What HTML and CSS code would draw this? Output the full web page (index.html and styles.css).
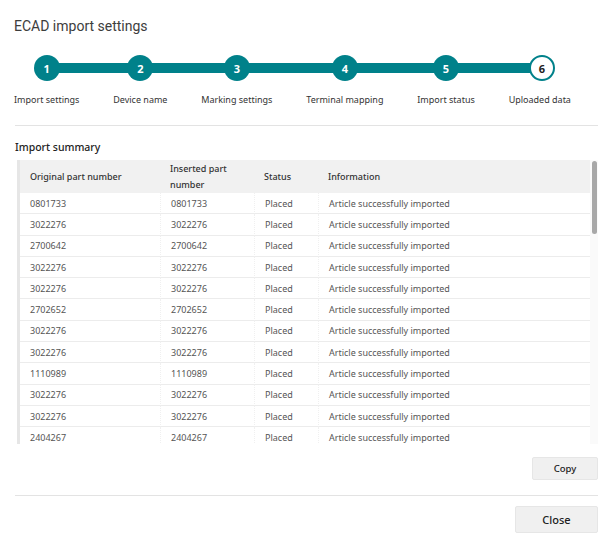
FILE: index.html
```html
<!DOCTYPE html>
<html lang="en">
  <head>
    <meta charset="UTF-8" />
    <meta name="viewport" content="width=device-width, initial-scale=1.0" />
    <title>ECAD import settings</title>
    <link rel="stylesheet" href="styles.css">
  </head>
  <body>
    <div class="dialog">
      <h1 class="title">ECAD import settings</h1>

      <div class="stepper">
        <div class="track"></div>
        <div class="step"><span class="dot">1</span><span class="label">Import settings</span></div>
        <div class="step"><span class="dot">2</span><span class="label">Device name</span></div>
        <div class="step"><span class="dot">3</span><span class="label">Marking settings</span></div>
        <div class="step"><span class="dot">4</span><span class="label">Terminal mapping</span></div>
        <div class="step"><span class="dot">5</span><span class="label">Import status</span></div>
        <div class="step current"><span class="dot">6</span><span class="label">Uploaded data</span></div>
      </div>

      <hr class="divider" />

      <h2 class="section-title">Import summary</h2>

      <div class="grid">
        <table>
          <thead>
            <tr>
              <th class="c1">Original part number</th>
              <th class="c2">Inserted part number</th>
              <th class="c3">Status</th>
              <th class="c4">Information</th>
            </tr>
          </thead>
          <tbody>
            <tr><td>0801733</td><td>0801733</td><td>Placed</td><td>Article successfully imported</td></tr>
            <tr><td>3022276</td><td>3022276</td><td>Placed</td><td>Article successfully imported</td></tr>
            <tr><td>2700642</td><td>2700642</td><td>Placed</td><td>Article successfully imported</td></tr>
            <tr><td>3022276</td><td>3022276</td><td>Placed</td><td>Article successfully imported</td></tr>
            <tr><td>3022276</td><td>3022276</td><td>Placed</td><td>Article successfully imported</td></tr>
            <tr><td>2702652</td><td>2702652</td><td>Placed</td><td>Article successfully imported</td></tr>
            <tr><td>3022276</td><td>3022276</td><td>Placed</td><td>Article successfully imported</td></tr>
            <tr><td>3022276</td><td>3022276</td><td>Placed</td><td>Article successfully imported</td></tr>
            <tr><td>1110989</td><td>1110989</td><td>Placed</td><td>Article successfully imported</td></tr>
            <tr><td>3022276</td><td>3022276</td><td>Placed</td><td>Article successfully imported</td></tr>
            <tr><td>3022276</td><td>3022276</td><td>Placed</td><td>Article successfully imported</td></tr>
            <tr><td>2404267</td><td>2404267</td><td>Placed</td><td>Article successfully imported</td></tr>
          </tbody>
        </table>
        <div class="scrollbar"><div class="thumb"></div></div>
      </div>

      <div class="actions">
        <button class="btn btn-copy">Copy</button>
      </div>

      <hr class="divider bottom" />

      <div class="actions">
        <button class="btn btn-close">Close</button>
      </div>
    </div>
  </body>
</html>
```

FILE: styles.css
```css
* {
  box-sizing: border-box;
}

html,
body {
  margin: 0;
  padding: 0;
  background-color: #fff;
}

body {
  font-family: "Noto Sans", "Open Sans", sans-serif;
  color: #333;
}

.dialog {
  width: 613px;
  height: 549px;
  padding: 15px 15px 0 14px;
}

.title {
  margin: 0;
  font-family: Roboto, "Noto Sans", sans-serif;
  font-size: 14px;
  font-weight: 400;
  line-height: 22px;
  color: #3d3d3d;
}

/* stepper */
.stepper {
  position: relative;
  display: flex;
  justify-content: space-between;
  margin: 18px 27px 0 0;
}

.track {
  position: absolute;
  top: 8px;
  left: 30px;
  right: 29px;
  height: 10px;
  background-color: #00818a;
}

.step {
  position: relative;
  display: flex;
  flex-direction: column;
  align-items: center;
}

.step:first-of-type .dot {
  margin-right: 5px;
}

.step.current .dot {
  margin-left: 4px;
}

.dot {
  width: 26px;
  height: 26px;
  border-radius: 50%;
  background-color: #00818a;
  color: #fff;
  font-size: 11px;
  font-weight: 700;
  display: flex;
  align-items: center;
  justify-content: center;
}

.step.current .dot {
  background-color: #fff;
  border: 2px solid #00818a;
  color: #222;
}

.label {
  margin-top: 12px;
  font-size: 9px;
  line-height: 14px;
  color: #333;
  white-space: nowrap;
}

.divider {
  margin: 18px 0 0 1px;
  border: none;
  border-top: 1px solid #e3e3e3;
}

.divider.bottom {
  margin-top: 15px;
}

.section-title {
  margin: 14px 0 0 1px;
  font-size: 10.5px;
  font-weight: 500;
  line-height: 14px;
  color: #222;
}

/* grid */
.grid {
  position: relative;
  margin: 6px 0 0 3px;
  height: 284px;
  overflow: hidden;
  border-left: 3px solid #e6e6e6;
}

table {
  width: 570px;
  border-collapse: separate;
  border-spacing: 0;
  font-size: 9px;
}

th {
  height: 33px;
  padding: 0 10px;
  text-align: left;
  font-weight: 500;
  line-height: 16px;
  color: #333;
  background-color: #f1f1f1;
}

.c1 { width: 140px; }
.c2 { width: 94px; }
.c3 { width: 64px; }

td {
  height: 21.3px;
  padding: 0 10px;
  color: #555;
  border-bottom: 1px solid #ececec;
  border-left: 1px dotted #f0f0f0;
  white-space: nowrap;
}

td:first-child {
  border-left: none;
}

.scrollbar {
  position: absolute;
  top: 0;
  right: 0;
  width: 8px;
  height: 100%;
  background-color: #fafafa;
}

.thumb {
  margin: 1px auto 0;
  width: 5px;
  height: 73px;
  border-radius: 3px;
  background-color: #a8a8a8;
}

/* buttons */
.actions {
  display: flex;
  justify-content: flex-end;
}

.btn {
  font-family: inherit;
  font-weight: 500;
  color: #222;
  background-color: #f0f0f0;
  border: 1px solid #e6e6e6;
  border-radius: 2px;
  cursor: pointer;
}

.btn-copy {
  margin-top: 13px;
  width: 66px;
  height: 23px;
  font-size: 9.5px;
}

.btn-close {
  margin-top: 10px;
  width: 83px;
  height: 27px;
  font-size: 11px;
}
```
